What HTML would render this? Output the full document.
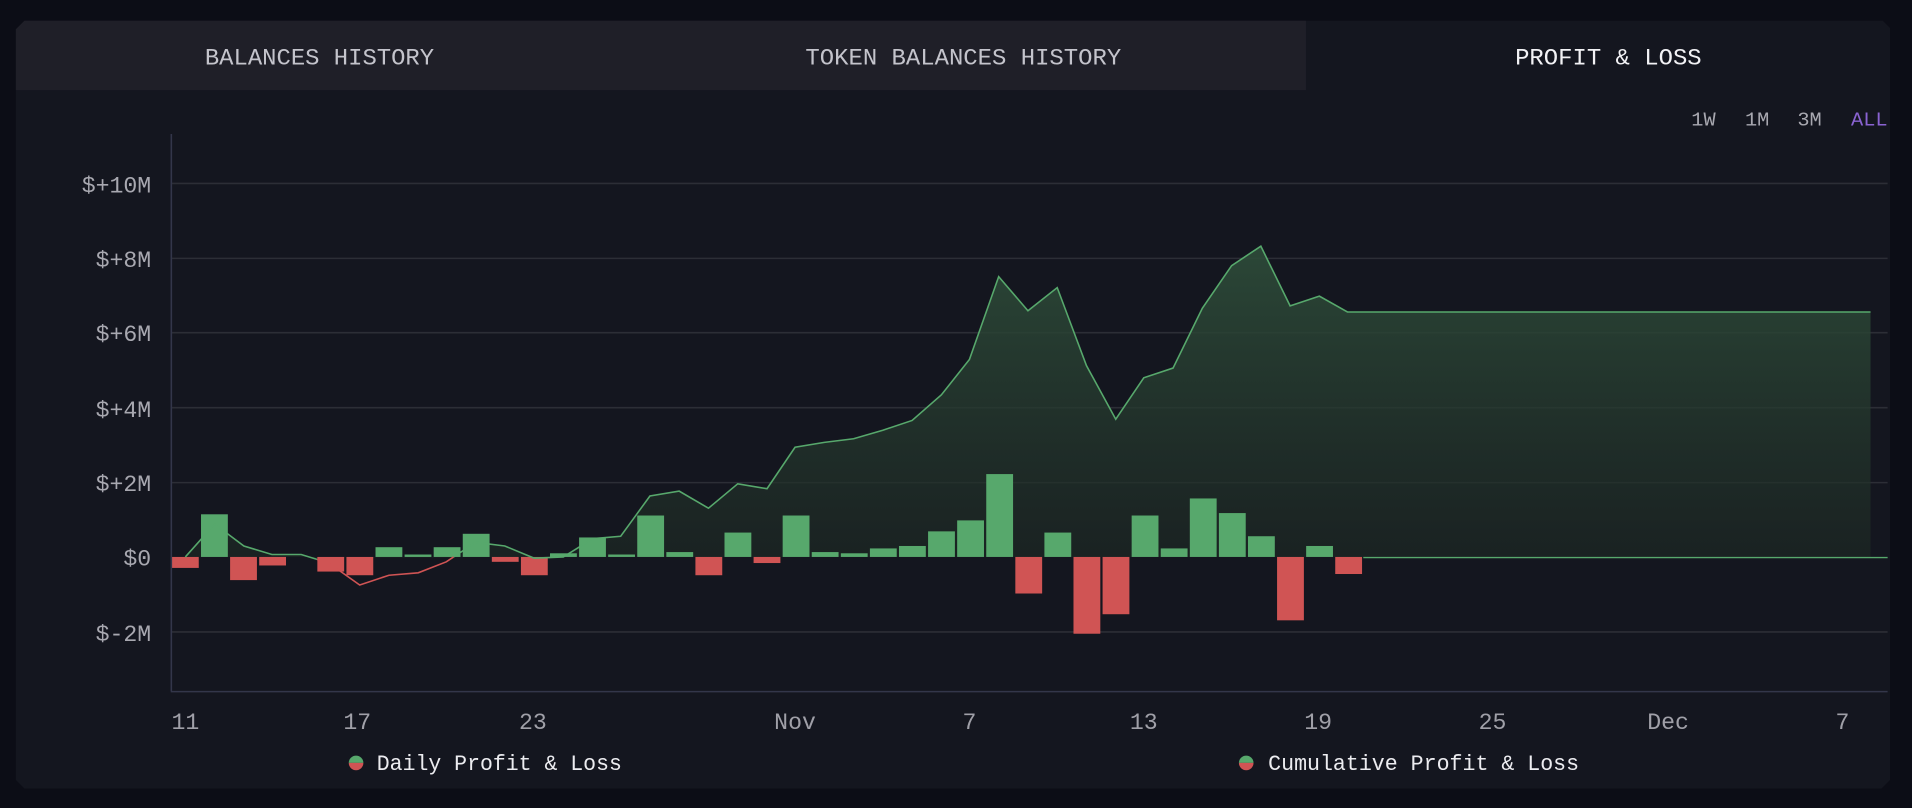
<!DOCTYPE html>
<html><head><meta charset="utf-8"><style>
html,body{margin:0;padding:0;background:#0c0d16;width:1912px;height:808px;overflow:hidden}
svg{display:block}
text{font-family:"Liberation Mono","DejaVu Sans Mono",monospace}
</style></head><body>
<svg width="1912" height="808" viewBox="0 0 1568 663" preserveAspectRatio="none">
<defs>
<linearGradient id="gf" x1="0" y1="0" x2="0" y2="1">
<stop offset="0" stop-color="#2e4d3a" stop-opacity="0.9"/>
<stop offset="1" stop-color="#1c2622" stop-opacity="0.6"/>
</linearGradient>
<clipPath id="above"><rect x="140" y="150" width="1410" height="307.5"/></clipPath>
</defs>
<rect width="1568" height="663" fill="#0c0d16"/>
<path d="M20 17 H1544 L1550 23 V640 L1543 647 H20 L13 640 V24 Z" fill="#14161f"/>
<path d="M20 17 H1071 V74 H13 V24 Z" fill="#1f1f28"/>
<text x="262" y="53" font-size="19" fill="#c4c4cc" text-anchor="middle" textLength="188" lengthAdjust="spacingAndGlyphs">BALANCES HISTORY</text>
<text x="790" y="53" font-size="19" fill="#c4c4cc" text-anchor="middle" textLength="259" lengthAdjust="spacingAndGlyphs">TOKEN BALANCES HISTORY</text>
<text x="1319" y="53" font-size="19" fill="#f2f2f5" text-anchor="middle" textLength="153" lengthAdjust="spacingAndGlyphs">PROFIT &amp; LOSS</text>
<g font-size="16" fill="#a8a8b0">
<text x="1387" y="103" textLength="20" lengthAdjust="spacingAndGlyphs">1W</text>
<text x="1431" y="103" textLength="20" lengthAdjust="spacingAndGlyphs">1M</text>
<text x="1474" y="103" textLength="20" lengthAdjust="spacingAndGlyphs">3M</text>
<text x="1518" y="103" textLength="30" lengthAdjust="spacingAndGlyphs" fill="#8a63d2">ALL</text>
</g>
<g stroke="#2c2e36" stroke-width="1.3">
<line x1="141" y1="150.5" x2="1548" y2="150.5"/>
<line x1="141" y1="212" x2="1548" y2="212"/>
<line x1="141" y1="273" x2="1548" y2="273"/>
<line x1="141" y1="334.5" x2="1548" y2="334.5"/>
<line x1="141" y1="396" x2="1548" y2="396"/>
<line x1="141" y1="518.5" x2="1548" y2="518.5"/>
</g>
<g font-size="19" fill="#a8a8b0" text-anchor="end">
<text x="124" y="158">$+10M</text>
<text x="124" y="219">$+8M</text>
<text x="124" y="280">$+6M</text>
<text x="124" y="342">$+4M</text>
<text x="124" y="403">$+2M</text>
<text x="124" y="464">$0</text>
<text x="124" y="526">$-2M</text>
</g>
<polygon clip-path="url(#above)" fill="url(#gf)" points="152,457 176,430 200,448 223,455 247,455 271,463 295,480 319,472 343,470 366,461 390,445 414,448 438,458 462,457 486,442 509,440 533,407 557,403 581,417 605,397 629,401 652,367 676,363 700,360 724,353 748,345 772,324 795,295 819,227 843,255 867,236 891,300 915,344 938,310 962,302 986,253 1010,218 1034,202 1058,251 1082,243 1105,256 1534,256 1534,457"/>
<g fill="#57a86c">
<rect x="164.85" y="422" width="22" height="35"/>
<rect x="307.95" y="449" width="22" height="8"/>
<rect x="331.8" y="455" width="22" height="2"/>
<rect x="355.65" y="449" width="22" height="8"/>
<rect x="379.5" y="438" width="22" height="19"/>
<rect x="451.05" y="454" width="22" height="3"/>
<rect x="474.9" y="441" width="22" height="16"/>
<rect x="498.75" y="455" width="22" height="2"/>
<rect x="522.6" y="423" width="22" height="34"/>
<rect x="546.45" y="453" width="22" height="4"/>
<rect x="594.15" y="437" width="22" height="20"/>
<rect x="641.85" y="423" width="22" height="34"/>
<rect x="665.7" y="453" width="22" height="4"/>
<rect x="689.55" y="454" width="22" height="3"/>
<rect x="713.4" y="450" width="22" height="7"/>
<rect x="737.25" y="448" width="22" height="9"/>
<rect x="761.1" y="436" width="22" height="21"/>
<rect x="784.95" y="427" width="22" height="30"/>
<rect x="808.8" y="389" width="22" height="68"/>
<rect x="856.5" y="437" width="22" height="20"/>
<rect x="928.05" y="423" width="22" height="34"/>
<rect x="951.9" y="450" width="22" height="7"/>
<rect x="975.75" y="409" width="22" height="48"/>
<rect x="999.6" y="421" width="22" height="36"/>
<rect x="1023.45" y="440" width="22" height="17"/>
<rect x="1071.15" y="448" width="22" height="9"/>
</g>
<g fill="#d05454">
<rect x="141" y="457" width="22" height="9"/>
<rect x="188.7" y="457" width="22" height="19"/>
<rect x="212.55" y="457" width="22" height="7"/>
<rect x="260.25" y="457" width="22" height="12"/>
<rect x="284.1" y="457" width="22" height="15"/>
<rect x="403.35" y="457" width="22" height="4"/>
<rect x="427.2" y="457" width="22" height="15"/>
<rect x="570.3" y="457" width="22" height="15"/>
<rect x="618" y="457" width="22" height="5"/>
<rect x="832.65" y="457" width="22" height="30"/>
<rect x="880.35" y="457" width="22" height="63"/>
<rect x="904.2" y="457" width="22" height="47"/>
<rect x="1047.3" y="457" width="22" height="52"/>
<rect x="1095" y="457" width="22" height="14"/>
</g>
<line x1="1118" y1="457.5" x2="1548" y2="457.5" stroke="#57a86c" stroke-width="1.2"/>
<polyline fill="none" stroke="#57a86c" stroke-width="1.3" points="152,457 176,430 200,448 223,455 247,455 260,459"/>
<polyline fill="none" stroke="#d05454" stroke-width="1.3" points="260,459 271,463 295,480 319,472 343,470 366,461 372,457"/>
<polyline fill="none" stroke="#57a86c" stroke-width="1.3" points="372,457 390,445 414,448 438,458 462,457 486,442 509,440 533,407 557,403 581,417 605,397 629,401 652,367 676,363 700,360 724,353 748,345 772,324 795,295 819,227 843,255 867,236 891,300 915,344 938,310 962,302 986,253 1010,218 1034,202 1058,251 1082,243 1105,256 1534,256"/>
<line x1="140.5" y1="110" x2="140.5" y2="567" stroke="#33364a" stroke-width="1.3"/>
<line x1="140" y1="567.5" x2="1548" y2="567.5" stroke="#33364a" stroke-width="1.3"/>
<g font-size="19" fill="#a0a0a8" text-anchor="middle">
<text x="152" y="598">11</text>
<text x="293" y="598">17</text>
<text x="437" y="598">23</text>
<text x="652" y="598">Nov</text>
<text x="795" y="598">7</text>
<text x="938" y="598">13</text>
<text x="1081" y="598">19</text>
<text x="1224" y="598">25</text>
<text x="1368" y="598">Dec</text>
<text x="1511" y="598">7</text>
</g>
<path d="M286 626 A6 6 0 0 1 298 626 Z" fill="#57a86c"/>
<path d="M286 626 A6 6 0 0 0 298 626 Z" fill="#d05454"/>
<path d="M1016 626 A6 6 0 0 1 1028 626 Z" fill="#57a86c"/>
<path d="M1016 626 A6 6 0 0 0 1028 626 Z" fill="#d05454"/>
<text x="309" y="632" font-size="18" fill="#ececf0" textLength="201" lengthAdjust="spacingAndGlyphs">Daily Profit &amp; Loss</text>
<text x="1040" y="632" font-size="18" fill="#ececf0" textLength="255" lengthAdjust="spacingAndGlyphs">Cumulative Profit &amp; Loss</text>
</svg>
</body></html>
